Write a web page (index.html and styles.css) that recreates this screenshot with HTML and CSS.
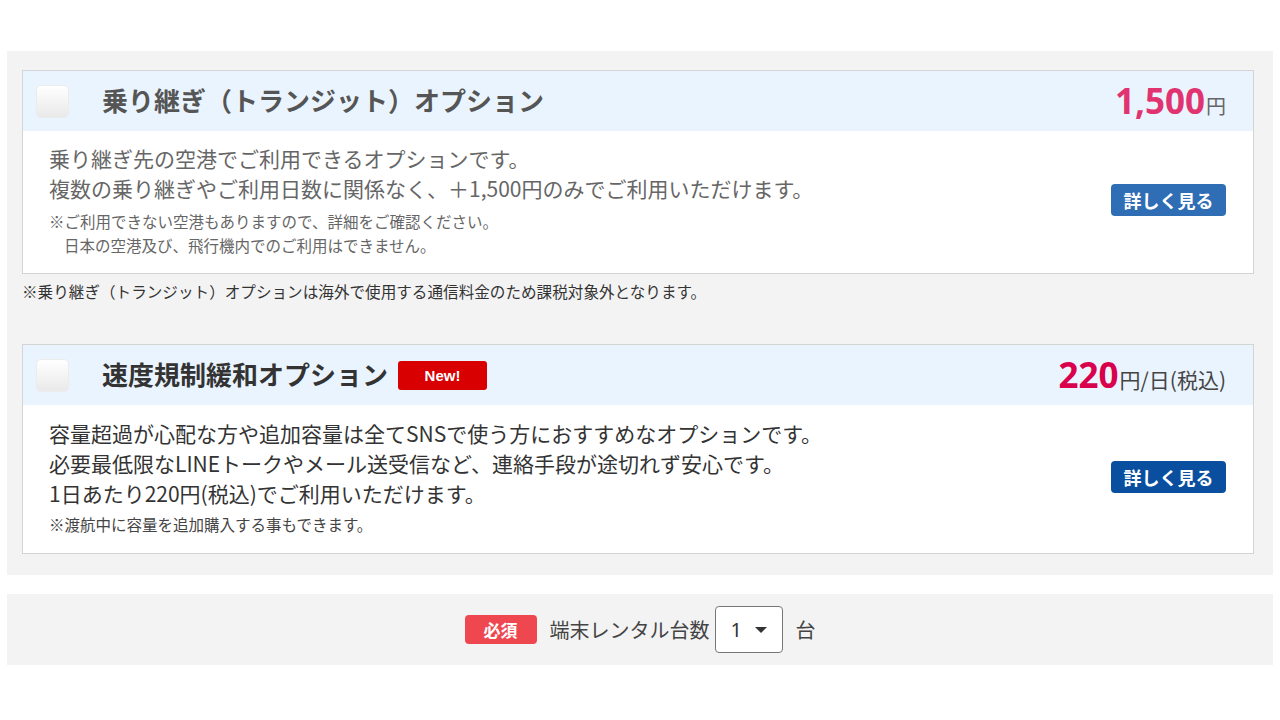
FILE: index.html
```html
<!DOCTYPE html>
<html lang="ja">
<head>
<meta charset="utf-8">
<link rel="stylesheet" href="styles.css">
</head>
<body>
<div class="page">
  <section class="panel">
    <div class="card">
      <div class="card-head">
        <span class="check"></span>
        <h2 class="title title-gray">乗り継ぎ（トランジット）オプション</h2>
        <div class="price price-pink"><span class="num">1,500</span><span class="unit-small">円</span></div>
      </div>
      <div class="card-body">
        <div class="desc desc-gray">
          <p class="line">乗り継ぎ先の空港でご利用できるオプションです。</p>
          <p class="line">複数の乗り継ぎやご利用日数に関係なく、＋1,500円のみでご利用いただけます。</p>
          <p class="small first-small">※ご利用できない空港もありますので、詳細をご確認ください。</p>
          <p class="small indent">日本の空港及び、飛行機内でのご利用はできません。</p>
        </div>
        <a class="more more-light">詳しく見る</a>
      </div>
    </div>
    <p class="outer-note">※乗り継ぎ（トランジット）オプションは海外で使用する通信料金のため課税対象外となります。</p>

    <div class="card card-second">
      <div class="card-head">
        <span class="check"></span>
        <h2 class="title title-dark">速度規制緩和オプション</h2>
        <span class="badge-new">New!</span>
        <div class="price price-red"><span class="num">220</span><span class="unit">円/日(税込)</span></div>
      </div>
      <div class="card-body card-body-2">
        <div class="desc desc-dark">
          <p class="line">容量超過が心配な方や追加容量は全てSNSで使う方におすすめなオプションです。</p>
          <p class="line">必要最低限なLINEトークやメール送受信など、連絡手段が途切れず安心です。</p>
          <p class="line">1日あたり220円(税込)でご利用いただけます。</p>
          <p class="small note-2">※渡航中に容量を追加購入する事もできます。</p>
        </div>
        <a class="more more-dark">詳しく見る</a>
      </div>
    </div>
  </section>

  <section class="panel panel-count">
    <span class="required">必須</span>
    <span class="count-label">端末レンタル台数</span>
    <span class="select"><span class="select-val">1</span><span class="caret"></span></span>
    <span class="count-unit">台</span>
  </section>
</div>
</body>
</html>
```

FILE: styles.css
```css
* { box-sizing: border-box; }
html, body { margin: 0; padding: 0; background: #fff; }
body {
  font-family: "Noto Sans CJK JP", "Noto Sans", sans-serif;
  color: #333;
}
p { margin: 0; }
h2 { margin: 0; }

.page {
  padding: 51px 7px 0 7px;
}

.panel {
  background: #f3f3f3;
  padding: 19px 19px 21px 15px;
}

.card {
  background: #fff;
  border: 1px solid #d4d4d4;
}

.card-head {
  height: 60px;
  background: #eaf4fe;
  display: flex;
  align-items: center;
  padding: 0 27px 0 13px;
}

.check {
  width: 33px;
  height: 33px;
  border-radius: 5px;
  background: linear-gradient(#ffffff, #e9e9e9);
  border: 1px solid #ececec;
  flex: none;
}

.title {
  font-size: 26px;
  font-weight: 700;
  margin-left: 33px;
  line-height: 1;
  margin-top: -3px;
}
.title-gray { color: #555; }
.title-dark { color: #333; }

.badge-new {
  margin-left: 10px;
  width: 89px;
  height: 29px;
  border-radius: 3px;
  background: #d80000;
  color: #fff;
  font-family: "Liberation Sans", Arial, sans-serif;
  font-weight: 700;
  font-size: 15px;
  display: flex;
  align-items: center;
  justify-content: center;
}

.price {
  margin-left: auto;
  display: flex;
  align-items: baseline;
}
.price .num {
  font-family: "Noto Sans", sans-serif;
  font-weight: 700;
  font-size: 35px;
  line-height: 1;
}
.price-pink .num { color: #e0336f; }
.price-red .num { color: #d9004c; }
.unit-small {
  font-size: 20px;
  color: #666;
  margin-left: 1px;
}
.unit {
  font-size: 21px;
  color: #444;
  margin-left: 1px;
}

.card-body {
  display: flex;
  align-items: center;
  padding: 12px 27px 16px 26px;
}
.card-body-2 { padding: 13px 27px 17px 26px; }

.desc { flex: 1; }
.line {
  font-size: 21px;
  line-height: 30px;
}
.small {
  font-size: 15.5px;
  line-height: 24px;
}
.first-small { margin-top: 6px; }
.note-2 { margin-top: 4px; }
.desc-gray .line { color: #666; }
.desc-gray .small { color: #666; }
.desc-dark .line { color: #333; }
.desc-dark .small { color: #444; }
.indent { padding-left: 15px; }

.more {
  width: 115px;
  height: 32px;
  border-radius: 4px;
  color: #fff;
  font-weight: 700;
  font-size: 18px;
  display: flex;
  align-items: center;
  justify-content: center;
  flex: none;
}
.more-light { background: #2f6db5; }
.more-dark { background: #0a4f9f; }

.outer-note {
  font-size: 15.6px;
  line-height: 20px;
  color: #333;
  padding: 7px 0 0 0;
  margin-bottom: 43px;
}

.panel-count {
  margin-top: 19px;
  height: 71px;
  padding: 0;
  display: flex;
  align-items: center;
  justify-content: center;
}
.required {
  width: 72px;
  height: 29px;
  border-radius: 4px;
  background: #ef4750;
  color: #fff;
  font-weight: 700;
  font-size: 17px;
  display: flex;
  align-items: center;
  justify-content: center;
}
.count-label {
  margin-left: 13px;
  font-size: 20px;
  color: #444;
}
.select {
  margin-left: 5px;
  width: 68px;
  height: 47px;
  border: 1px solid #777;
  border-radius: 4px;
  background: #fff;
  display: flex;
  align-items: center;
  padding-left: 15px;
}
.select-val {
  font-family: "Noto Sans", sans-serif;
  font-size: 20px;
  color: #333;
}
.caret {
  margin-left: 13px;
  width: 0;
  height: 0;
  border-left: 6px solid transparent;
  border-right: 6px solid transparent;
  border-top: 6px solid #333;
}
.count-unit {
  margin-left: 13px;
  font-size: 20px;
  color: #444;
}
```
